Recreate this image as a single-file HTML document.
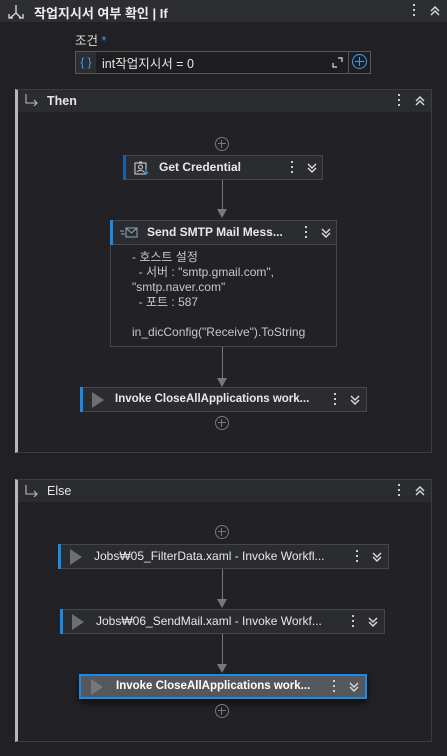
<!DOCTYPE html>
<html><head><meta charset="utf-8"><style>
*{box-sizing:border-box;margin:0;padding:0}
body{width:447px;height:756px;background:#212124;font-family:"Liberation Sans","Noto Sans CJK KR",sans-serif;color:#e6e6e6;position:relative;overflow:hidden;font-size:12px}
.abs{position:absolute}
.hdr{left:0;top:0;width:447px;height:22px;background:#2d2e32}
.dots{position:absolute;width:3px}
.dots i{display:block;width:2px;height:2px;background:#ccc;margin-bottom:3px}
.panel{position:absolute;border:1px solid #3c3d41;border-left:3px solid #b8b8b8;background:#222226}
.ph{position:absolute;left:0;right:0;top:0;height:22px;background:#2b2c30}
.box{position:absolute;background:#2b2c30;border:1px solid #46474b;height:25px;font-size:12px;font-weight:bold;color:#e8e8e8;line-height:23px;white-space:nowrap}
.acc{position:absolute;left:-1px;top:-1px;bottom:-1px;width:3px;background:#1a8ae6}
.plus{position:absolute;width:14px;height:14px;border:1.3px solid #77787c;border-radius:50%}
.plus:before{content:"";position:absolute;left:2px;right:2px;top:5px;height:1.3px;background:#77787c}
.plus:after{content:"";position:absolute;top:2px;bottom:2px;left:5px;width:1.3px;background:#77787c}
.line{position:absolute;width:1px;background:#77787c}
.arr{position:absolute;width:0;height:0;border-left:5px solid transparent;border-right:5px solid transparent;border-top:9px solid #77787c}
.tri{position:absolute;width:0;height:0;border-top:8px solid transparent;border-bottom:8px solid transparent;border-left:12px solid #6e6f73}
</style></head><body>
<div class="abs hdr"></div>
<svg class="abs" style="left:8px;top:4px" width="16" height="16" viewBox="0 0 16 16" fill="none" stroke="#ddd" stroke-width="1.3"><path d="M8 1v8L2 14M8 9l5 5M1 10v4h4M15 10v4h-4"/></svg>
<div class="abs" style="left:34px;top:3px;font-size:13px;font-weight:bold;color:#eee">작업지시서 여부 확인 | If</div>
<div class="dots" style="left:413px;top:4px"><i></i><i></i><i></i></div>
<svg class="abs" style="left:429px;top:5px" width="12" height="12" viewBox="0 0 12 12" fill="none" stroke="#ddd" stroke-width="1.4"><path d="M2 6l4-4 4 4M2 10l4-4 4 4"/></svg>

<div class="abs" style="left:75px;top:30px;font-size:12.5px;color:#ddd">조건 <span style="color:#3a9cf0">*</span></div>
<div class="abs" style="left:75px;top:51px;width:296px;height:23px;border:1px solid #56575b;background:#1e1e21"></div>
<div class="abs" style="left:76px;top:52px;width:20px;height:21px;background:#2d2e32;color:#3a9cf0;font-size:12px;line-height:20px;text-align:center">{ }</div>
<div class="abs" style="left:102px;top:53px;font-size:12.5px;color:#e6e6e6">int작업지시서 = 0</div>
<svg class="abs" style="left:332px;top:57px" width="11" height="11" viewBox="0 0 11 11" fill="none" stroke="#ddd" stroke-width="1.2"><path d="M1 6v4h4M6 1h4v4"/></svg>
<div class="abs" style="left:348px;top:52px;width:1px;height:21px;background:#56575b"></div>
<div class="abs" style="left:352px;top:54px;width:15px;height:15px;border:1.4px solid #3a9cf0;border-radius:50%"></div>
<div class="abs" style="left:355px;top:61px;width:9px;height:1.4px;background:#3a9cf0"></div>
<div class="abs" style="left:359px;top:57px;width:1.4px;height:9px;background:#3a9cf0"></div>

<!-- Then -->
<div class="panel" style="left:15px;top:89px;width:417px;height:364px"><div class="ph"></div></div>
<svg class="abs" style="left:25px;top:94px" width="14" height="12" viewBox="0 0 14 12" fill="none" stroke="#bbb" stroke-width="1.1"><path d="M1 0v9h11M9 6l3 3-3 3"/></svg>
<div class="abs" style="left:47px;top:94px;font-size:12.5px;font-weight:bold">Then</div>
<div class="dots" style="left:398px;top:94px"><i></i><i></i><i></i></div>
<svg class="abs" style="left:414px;top:95px" width="12" height="12" viewBox="0 0 12 12" fill="none" stroke="#ddd" stroke-width="1.4"><path d="M2 6l4-4 4 4M2 10l4-4 4 4"/></svg>

<div class="plus" style="left:215px;top:137px"></div>
<div class="box" style="left:123px;top:155px;width:200px"><div class="acc" style="background:#1c5ea8"></div>
<svg class="abs" style="left:9px;top:4px" width="16" height="16" viewBox="0 0 16 16" fill="none" stroke="#ccc" stroke-width="1.1"><rect x="2" y="3" width="11" height="11"/><circle cx="7.5" cy="7" r="2"/><path d="M4 12c1-2 6-2 7 0M6 2h3"/><path d="M13 9v5M11 12l2 2 2-2" stroke="#3a9cf0"/></svg>
<span class="abs" style="left:35px">Get Credential</span>
<div class="dots" style="left:167px;top:5px"><i></i><i></i><i></i></div>
<svg class="abs" style="left:182px;top:6px" width="12" height="12" viewBox="0 0 12 12" fill="none" stroke="#ddd" stroke-width="1.4"><path d="M2 2l4 4 4-4M2 6l4 4 4-4"/></svg></div>
<div class="line" style="left:222px;top:180px;height:30px"></div><div class="arr" style="left:217px;top:209px"></div>

<div class="abs" style="left:110px;top:220px;width:227px;height:127px;border:1px solid #46474b;background:#222226"></div>
<div class="box" style="left:110px;top:220px;width:227px"><div class="acc"></div>
<svg class="abs" style="left:9px;top:6px" width="18" height="12" viewBox="0 0 18 12" fill="none" stroke="#8ab" stroke-width="1"><rect x="6" y="1" width="11" height="9"/><path d="M6 1l5.5 5 5.5-5M0 4h4M1 7h4"/></svg>
<span class="abs" style="left:36px">Send SMTP Mail Mess...</span>
<div class="dots" style="left:194px;top:5px"><i></i><i></i><i></i></div>
<svg class="abs" style="left:209px;top:6px" width="12" height="12" viewBox="0 0 12 12" fill="none" stroke="#ddd" stroke-width="1.4"><path d="M2 2l4 4 4-4M2 6l4 4 4-4"/></svg></div>
<div class="abs" style="left:132px;top:250px;font-size:12px;color:#c8c8c8;line-height:15px;white-space:pre">- 호스트 설정
  - 서버 : "smtp.gmail.com",</div>
<div class="abs" style="left:132px;top:280px;font-size:12px;color:#c8c8c8;line-height:15px;white-space:pre">"smtp.naver.com"
  - 포트 : 587

in_dicConfig("Receive").ToString</div>
<div class="line" style="left:222px;top:347px;height:32px"></div><div class="arr" style="left:217px;top:378px"></div>

<div class="box" style="left:80px;top:387px;width:287px"><div class="acc"></div>
<div class="tri" style="left:11px;top:4px"></div>
<span class="abs" style="left:34px;font-size:11.5px">Invoke CloseAllApplications work...</span>
<div class="dots" style="left:253px;top:5px"><i></i><i></i><i></i></div>
<svg class="abs" style="left:268px;top:6px" width="12" height="12" viewBox="0 0 12 12" fill="none" stroke="#ddd" stroke-width="1.4"><path d="M2 2l4 4 4-4M2 6l4 4 4-4"/></svg></div>
<div class="plus" style="left:215px;top:416px"></div>

<!-- Else -->
<div class="panel" style="left:15px;top:479px;width:417px;height:263px"><div class="ph"></div></div>
<svg class="abs" style="left:25px;top:485px" width="14" height="12" viewBox="0 0 14 12" fill="none" stroke="#bbb" stroke-width="1.1"><path d="M1 0v9h11M9 6l3 3-3 3"/></svg>
<div class="abs" style="left:47px;top:484px;font-size:12.5px">Else</div>
<div class="dots" style="left:398px;top:484px"><i></i><i></i><i></i></div>
<svg class="abs" style="left:414px;top:485px" width="12" height="12" viewBox="0 0 12 12" fill="none" stroke="#ddd" stroke-width="1.4"><path d="M2 6l4-4 4 4M2 10l4-4 4 4"/></svg>

<div class="plus" style="left:215px;top:525px"></div>
<div class="box" style="left:58px;top:544px;width:331px"><div class="acc"></div>
<div class="tri" style="left:11px;top:4px"></div>
<span class="abs" style="left:35px;font-weight:normal">Jobs₩05_FilterData.xaml - Invoke Workfl...</span>
<div class="dots" style="left:297px;top:5px"><i></i><i></i><i></i></div>
<svg class="abs" style="left:312px;top:6px" width="12" height="12" viewBox="0 0 12 12" fill="none" stroke="#ddd" stroke-width="1.4"><path d="M2 2l4 4 4-4M2 6l4 4 4-4"/></svg></div>
<div class="line" style="left:222px;top:569px;height:30px"></div><div class="arr" style="left:217px;top:599px"></div>

<div class="box" style="left:60px;top:609px;width:325px"><div class="acc"></div>
<div class="tri" style="left:11px;top:4px"></div>
<span class="abs" style="left:35px;font-weight:normal">Jobs₩06_SendMail.xaml - Invoke Workf...</span>
<div class="dots" style="left:291px;top:5px"><i></i><i></i><i></i></div>
<svg class="abs" style="left:306px;top:6px" width="12" height="12" viewBox="0 0 12 12" fill="none" stroke="#ddd" stroke-width="1.4"><path d="M2 2l4 4 4-4M2 6l4 4 4-4"/></svg></div>
<div class="line" style="left:222px;top:634px;height:30px"></div><div class="arr" style="left:217px;top:664px"></div>

<div class="box" style="left:79px;top:674px;width:288px;height:25px;border:2px solid #1a8ae6;background:#56575c;box-shadow:0 4px 8px rgba(0,0,0,.6);line-height:21px">
<div class="tri" style="left:10px;top:3px;border-left-color:#77787c"></div>
<span class="abs" style="left:35px;color:#fff;font-size:11.5px">Invoke CloseAllApplications work...</span>
<div class="dots" style="left:252px;top:4px"><i></i><i></i><i></i></div>
<svg class="abs" style="left:267px;top:5px" width="12" height="12" viewBox="0 0 12 12" fill="none" stroke="#ddd" stroke-width="1.4"><path d="M2 2l4 4 4-4M2 6l4 4 4-4"/></svg></div>
<div class="plus" style="left:215px;top:704px"></div>
</body></html>
